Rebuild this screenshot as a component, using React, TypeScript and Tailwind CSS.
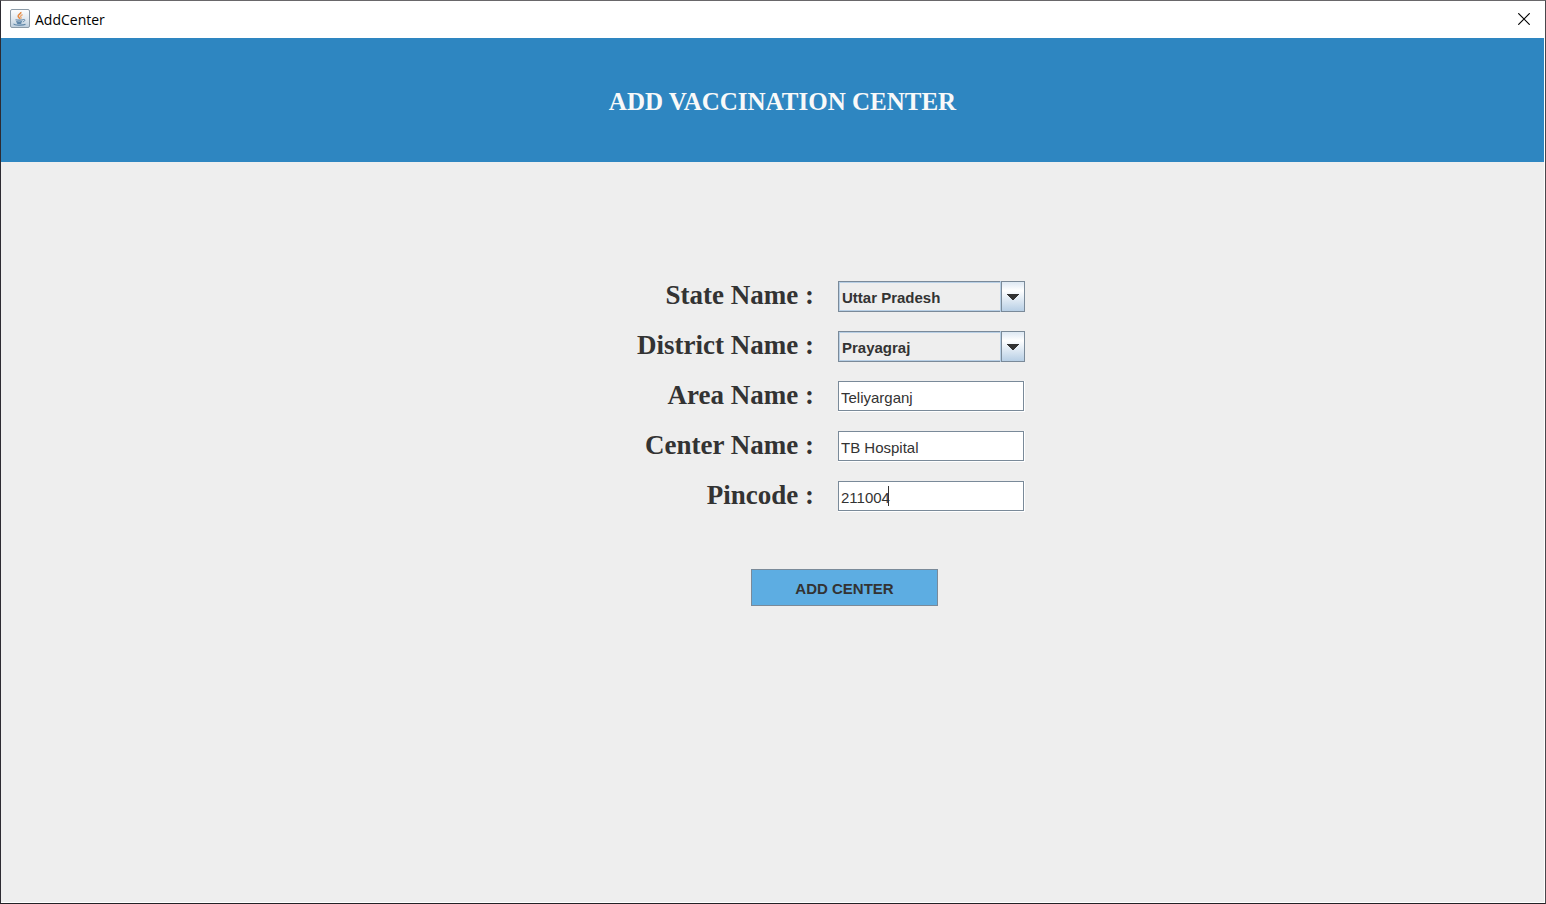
import { useState } from "react";
import type { ReactNode } from "react";

const states = ["Uttar Pradesh", "Bihar", "Delhi", "Maharashtra"];
const districts = ["Prayagraj", "Lucknow", "Kanpur", "Varanasi"];

function JavaIcon() {
  return (
    <svg width="20" height="20" viewBox="0 0 20 20" fill="none" aria-hidden="true">
      <defs>
        <linearGradient id="tile" x1="0" y1="0" x2="0" y2="1">
          <stop offset="0" stopColor="#fdfefe" />
          <stop offset="0.5" stopColor="#e3eaf0" />
          <stop offset="1" stopColor="#bccddc" />
        </linearGradient>
      </defs>
      <rect x="0.5" y="0.5" width="19" height="18" rx="1.5" fill="url(#tile)" stroke="#8b9aa7" />
      <path d="M10.8 3c.8 1.700-3 2.600-2.600 4.300.2.9 1.400 1.500 1.600 2.600" stroke="#e58a43" strokeWidth="1.6" />
      <path d="M12.600 5.600c-1.800.8-2.600 1.600-1.700 2.600.5.600.2 1.200-.3 1.700" stroke="#e9a46c" strokeWidth="1.2" />
      <path d="M5.500 10.700c1.600.6 5.900.6 7.500 0M6.200 12.600c1.500.5 4.500.5 5.800 0M7 14.100c1.200.4 3.200.4 4.300 0" stroke="#5f86a8" strokeWidth="1.2" />
      <path d="M13.200 10.500c2.300-.6 2.300 1.600-.4 2.400" stroke="#5f86a8" />
      <path d="M4 14.800c-.7 1.600 9 1.900 11.500.5" stroke="#5f86a8" strokeWidth="1.2" />
    </svg>
  );
}

function Row({ id, label, children }: { id: string; label: string; children: ReactNode }) {
  return (
    <div className="grid grid-cols-[190px_187px] items-center gap-6">
      <label
        htmlFor={id}
        className="pb-[2px] text-right font-[Georgia,'Liberation_Serif',serif] text-[27px] leading-[29px] font-bold whitespace-nowrap"
      >
        {label}
      </label>
      {children}
    </div>
  );
}

function SelectField({ id, label, options }: { id: string; label: string; options: string[] }) {
  return (
    <Row id={id} label={label}>
      <div className="relative">
        <select
          id={id}
          className="block h-[31px] w-full appearance-none border border-[#7a8a99] bg-[#eeeeee] pt-[3px] pr-6 pl-[3px] text-[15px] font-bold shadow-[inset_1px_1px_#b8cfe5,inset_0_-1px_#b8cfe5] outline-none"
        >
          {options.map((option) => (
            <option key={option}>{option}</option>
          ))}
        </select>
        <span className="pointer-events-none absolute inset-y-0 right-0 flex w-[25px] border-l border-[#b8cfe5]">
          <span className="flex flex-1 items-center justify-center border border-[#7a8a99] bg-linear-to-b from-[#dde8f3] via-white via-30% to-[#b8cfe5]">
            <svg width="12" height="6" viewBox="0 0 12 6" fill="#333333" aria-hidden="true">
              <path d="M0 0h12v1h-1v1h-1v1H9v1H8v1H7v1H5V5H4V4H3V3H2V2H1V1H0z" />
            </svg>
          </span>
        </span>
      </div>
    </Row>
  );
}

function TextField({ id, label, initial, caret }: { id: string; label: string; initial: string; caret?: boolean }) {
  const [value, setValue] = useState(initial);
  const [showCaret, setShowCaret] = useState(caret);
  return (
    <Row id={id} label={label}>
      <div className="relative border-r border-b border-white">
        <input
          id={id}
          type="text"
          value={value}
          onChange={(event) => setValue(event.target.value)}
          onFocus={() => setShowCaret(false)}
          className="block h-[30px] w-full border border-[#7a8a99] bg-white pt-[3px] pl-[2px] text-[15px] outline-none"
        />
        {showCaret && <span className="absolute top-[5px] left-[50px] h-5 w-px bg-[#333333]" />}
      </div>
    </Row>
  );
}

export default function App() {
  return (
    <div className="flex min-h-screen flex-col border border-t-[#69676a] border-r-[#4a484c] border-b-[#232226] border-l-[#2d2b32] bg-[#eeeeee] font-['Liberation_Sans',Arial,sans-serif] text-[#333333]">
      <header className="flex h-[37px] items-center justify-between bg-white pr-[15px] pb-px pl-[9px]">
        <div className="flex items-center gap-[5px]">
          <JavaIcon />
          <span className="font-['Segoe_UI','Open_Sans',sans-serif] text-[14px] text-black">AddCenter</span>
        </div>
        <button type="button" aria-label="Close" className="text-black">
          <svg width="12" height="12" viewBox="0 0 12 12" stroke="currentColor" strokeWidth="1.2" aria-hidden="true">
            <path d="M.3.300l11.400 11.400M11.700.3l-11.400 11.400" />
          </svg>
        </button>
      </header>
      <main className="flex flex-1 flex-col border-r border-b border-white">
        <div className="flex h-[124px] items-center justify-center bg-[#2e86c1] pt-1 pl-5">
          <h1 className="font-['Liberation_Serif','Times_New_Roman',serif] text-[25px] font-bold text-[#f8f9f9]">
            ADD VACCINATION CENTER
          </h1>
        </div>
        <form className="flex flex-col items-center pt-[119px]" onSubmit={(event) => event.preventDefault()}>
          <div className="flex flex-col gap-[19px] pl-[104px]">
            <SelectField id="state" label="State Name :" options={states} />
            <SelectField id="district" label="District Name :" options={districts} />
            <TextField id="area" label="Area Name :" initial="Teliyarganj" />
            <TextField id="center" label="Center Name :" initial="TB Hospital" />
            <TextField id="pincode" label="Pincode :" initial="211004" caret />
          </div>
          <div className="mt-[57px] pl-36">
            <button
              type="submit"
              className="h-[37px] w-[187px] border border-[#7a8a99] bg-[#5dade2] pt-[3px] text-[15px] font-bold"
            >
              ADD CENTER
            </button>
          </div>
        </form>
      </main>
    </div>
  );
}
